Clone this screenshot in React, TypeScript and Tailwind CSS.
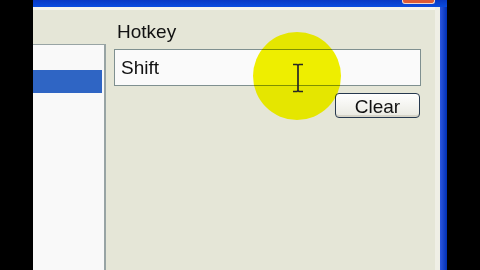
import React from 'react';

const font = { fontFamily: '"Liberation Sans", Arial, sans-serif' };

function IBeam() {
  return (
    <svg className="absolute left-[291px] top-[63px]" width="14" height="30" viewBox="0 0 14 30">
      <path d="M2 1.5 H6 L7 2.5 L8 1.5 H12 M7 2.5 V27.5 M2 28.5 H6 L7 27.5 L8 28.5 H12" fill="none" stroke="#262626" strokeWidth="1.7" />
    </svg>
  );
}

export default function App() {
  return (
    <div className="relative flex h-[270px] w-[480px] overflow-hidden bg-black text-[#111]" style={font}>
      <div className="w-[33px] shrink-0" />
      <div className="flex w-[414px] shrink-0 flex-col">
        <div className="flex h-[7px] items-start justify-end bg-gradient-to-b from-[#0838c4] to-[#0a4ce0] pr-[12px]">
          <div className="h-[4px] w-[33px] rounded-b-[3px] border border-t-0 border-[#f0d8cc] bg-[#dd5a36]" />
        </div>
        <div className="flex flex-1">
          <div className="flex flex-1 flex-col bg-[#e5e6d7]">
            <div className="h-[3px] bg-[#f4f4ee]" />
            <div className="flex flex-1">
              <div className="mt-[34px] w-[73px] border-t border-r-2 border-[#98a4a4] bg-[#f9f9f9] pt-[25px] pr-[2px]">
                <div className="h-[23px] bg-[#2f65c4]" />
              </div>
              <div className="ml-[8px] flex w-[307px] flex-col">
                <div className="mt-[11px] h-[22px] pl-[3px] text-[19px] leading-[22px]">Hotkey</div>
                <div className="mt-[6px] flex h-[37px] items-center border border-[#7f9090] bg-[#fafafa] pl-[6px] text-[19px] leading-[22px]">
                  Shift
                </div>
                <button
                  type="button"
                  className="mt-[7px] mr-[1px] h-[25px] w-[85px] self-end rounded-[4px] border border-[#27394f] bg-gradient-to-b from-white to-[#e9e9e1] pt-[2px] text-[19px] leading-[21px] text-[#111] shadow-[inset_0_-2px_0_#d6d4c8]"
                >
                  Clear
                </button>
              </div>
            </div>
          </div>
          <div className="w-[5px] bg-[#efefe6]" />
          <div className="w-[7px] bg-gradient-to-r from-[#2c58e2] to-[#0030b4]" />
        </div>
      </div>
      <div className="w-[33px] shrink-0" />

      <div className="absolute left-[253px] top-[32px] h-[88px] w-[88px] rounded-full bg-[#eeee00] mix-blend-darken blur-[0.6px]" />
      <IBeam />
    </div>
  );
}
